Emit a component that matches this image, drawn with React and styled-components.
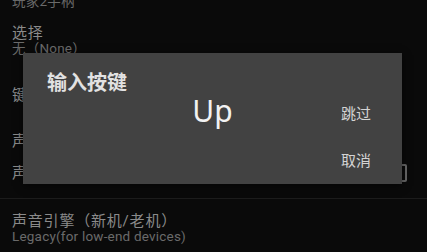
import React from 'react';
import styled, { createGlobalStyle } from 'styled-components';

const GlobalStyle = createGlobalStyle`
  html, body {
    margin: 0;
    padding: 0;
    background: #0a0a0a;
  }
  body {
    font-family: Roboto, "Noto Sans CJK SC", "Noto Sans", sans-serif;
  }
`;

const Screen = styled.div`
  position: relative;
  width: 427px;
  height: 252px;
  overflow: hidden;
  background: #0a0a0a;
`;

const List = styled.div`
  display: flex;
  flex-direction: column;
`;

const Pref = styled.div`
  display: flex;
  align-items: center;
  justify-content: space-between;
  padding: 0 12px;
  margin-top: ${(p) => p.$top}px;
`;

const PrefText = styled.div`
  display: flex;
  flex-direction: column;
`;

const PrefTitle = styled.div`
  font-size: 15px;
  line-height: 15px;
  letter-spacing: 0.8px;
  color: #8a8a8a;
  white-space: nowrap;
`;

const PrefSummary = styled.div`
  font-size: 13.5px;
  line-height: 15px;
  letter-spacing: 0.2px;
  color: #6a6a6a;
  white-space: nowrap;
`;

const Checkbox = styled.div`
  width: 14px;
  height: 14px;
  border: 2px solid #6a6a6a;
  border-radius: 2px;
  margin-right: 8px;
`;

const Divider = styled.div`
  height: 1px;
  background: #1c1c1c;
  margin-top: 16px;
`;

const Dialog = styled.div`
  position: absolute;
  left: 23px;
  top: 53px;
  width: 379px;
  height: 131px;
  background: #424242;
  box-shadow: 0 2px 8px rgba(0, 0, 0, 0.6);
  display: flex;
  flex-direction: column;
`;

const DialogTitle = styled.div`
  padding: 18px 24px 0;
  font-size: 20px;
  line-height: 22px;
  font-weight: 700;
  color: #e2e2e2;
  font-family: "Noto Sans CJK SC", sans-serif;
`;

const DialogBody = styled.div`
  display: grid;
  grid-template-columns: 1fr auto 1fr;
  align-items: start;
  margin-top: 1px;
`;

const KeyName = styled.div`
  grid-column: 2;
  font-size: 30px;
  line-height: 34px;
  color: #f2f2f2;
  font-family: "Noto Sans", sans-serif;
`;

const Actions = styled.div`
  grid-column: 3;
  justify-self: end;
  display: flex;
  flex-direction: column;
  gap: 11px;
  padding-right: 31px;
`;

const ActionButton = styled.div`
  height: 36px;
  display: flex;
  align-items: center;
  font-size: 15px;
  color: #d4d4d4;
  font-family: "Noto Sans CJK SC", sans-serif;
`;

export default function App() {
  return (
    <Screen>
      <GlobalStyle />
      <List>
        <Pref $top={-6}>
          <PrefText>
            <PrefSummary>玩家2手柄</PrefSummary>
          </PrefText>
        </Pref>
        <Pref $top={17}>
          <PrefText>
            <PrefTitle>选择</PrefTitle>
            <PrefSummary>无（None）</PrefSummary>
          </PrefText>
        </Pref>
        <Pref $top={32}>
          <PrefText>
            <PrefTitle>键位设置</PrefTitle>
          </PrefText>
        </Pref>
        <Pref $top={31}>
          <PrefText>
            <PrefTitle>声音</PrefTitle>
          </PrefText>
        </Pref>
        <Pref $top={15}>
          <PrefText>
            <PrefTitle>声音延迟</PrefTitle>
          </PrefText>
          <Checkbox />
        </Pref>
        <Divider />
        <Pref $top={15}>
          <PrefText>
            <PrefTitle>声音引擎（新机/老机）</PrefTitle>
            <PrefSummary>Legacy(for low-end devices)</PrefSummary>
          </PrefText>
        </Pref>
      </List>
      <Dialog>
        <DialogTitle>输入按键</DialogTitle>
        <DialogBody>
          <KeyName>Up</KeyName>
          <Actions>
            <ActionButton>跳过</ActionButton>
            <ActionButton>取消</ActionButton>
          </Actions>
        </DialogBody>
      </Dialog>
    </Screen>
  );
}
